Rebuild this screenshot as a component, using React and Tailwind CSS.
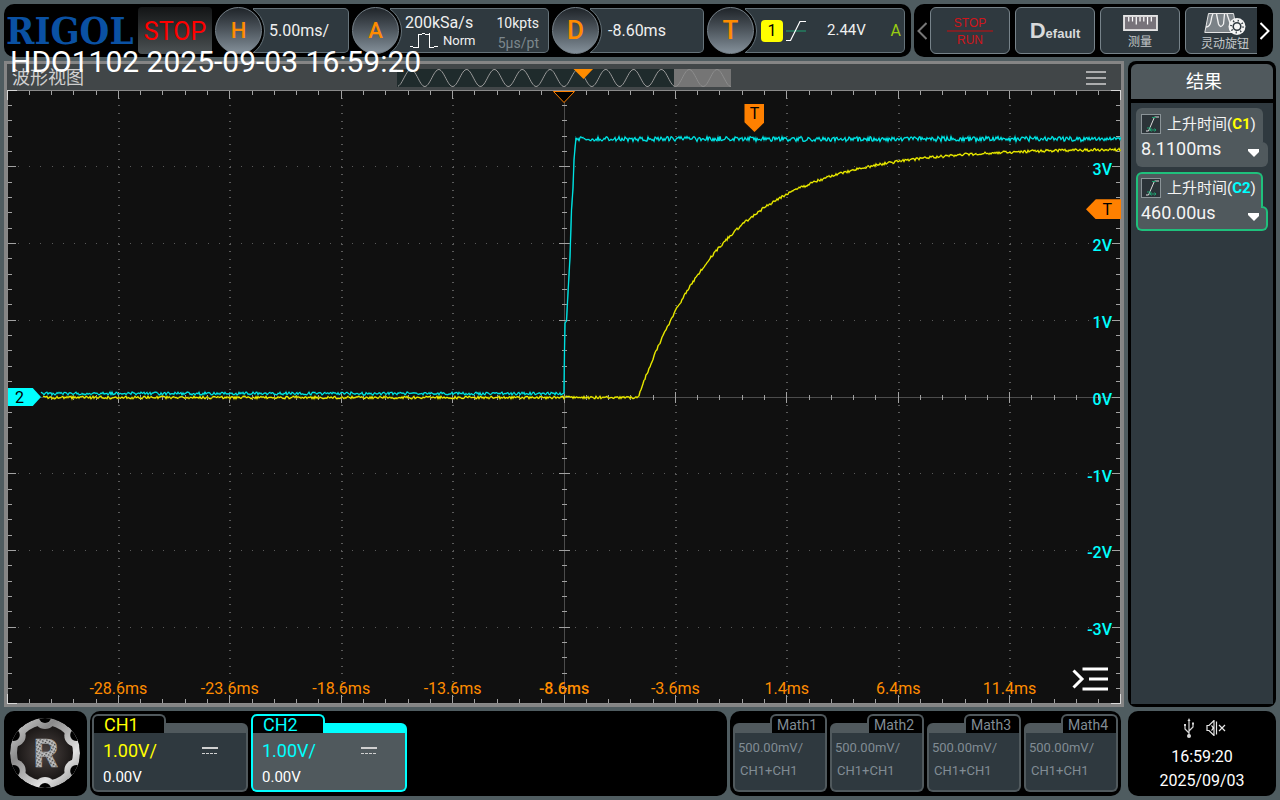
import React from "react";

const PLOT_W = 1114;
const PLOT_H = 614;
const COLS = 10;
const ROWS = 8;
const DIV_X = PLOT_W / COLS;
const DIV_Y = PLOT_H / ROWS;

const TIME_LABELS = ["-28.6ms", "-23.6ms", "-18.6ms", "-13.6ms", "-8.6ms", "-3.6ms", "1.4ms", "6.4ms", "11.4ms"];
const VOLT_LABELS = ["3V", "2V", "1V", "0V", "-1V", "-2V", "-3V"];
const MATH_CHANNELS = ["Math1", "Math2", "Math3", "Math4"];

const CHANNELS = [
  { name: "CH1", scale: "1.00V/", offset: "0.00V", selected: false },
  { name: "CH2", scale: "1.00V/", offset: "0.00V", selected: true },
];

const RESULTS = [
  { source: "C1", value: "8.1100ms", active: false },
  { source: "C2", value: "460.00us", active: true },
];

// small repeatable noise source so the traces look the same on every render
const makeNoise = (seed) => {
  let s = seed;
  return () => {
    s = (s * 16807) % 2147483647;
    return s / 2147483647 - 0.5;
  };
};

const toPath = (points) => points.map(([x, y], i) => `${i ? "L" : "M"}${x.toFixed(1)} ${y.toFixed(1)}`).join("");

const buildCh1 = () => {
  const noise = makeNoise(77);
  const points = [];
  for (let x = 36; x <= PLOT_W; x += 1) {
    const rise = x > 631 ? 249 * (1 - Math.exp(-(x - 631) / 88)) : 0;
    points.push([x, 307.5 - rise + noise() * 2.6]);
  }
  return toPath(points);
};

const buildCh2 = () => {
  const noise = makeNoise(1234);
  const points = [];
  for (let x = 34; x <= 556; x += 1) points.push([x, 303.5 + noise() * 3]);
  points.push([557, 303], [557.5, 260], [558, 233], [559.5, 231], [560.5, 212], [563, 167], [564.5, 120], [566, 98], [567, 70], [568, 58], [569, 48]);
  for (let x = 570; x <= PLOT_W; x += 1) points.push([x, 49 + noise() * 5]);
  return toPath(points);
};

const CH1_PATH = buildCh1();
const CH2_PATH = buildCh2();

const range = (n) => Array.from({ length: n }, (_, i) => i);

const Graticule = () => {
  const minorX = range(COLS * 5 + 1).map((i) => ({ x: (i * DIV_X) / 5, major: i % 5 === 0 }));
  const minorY = range(ROWS * 5 + 1).map((i) => ({ y: (i * DIV_Y) / 5, major: i % 5 === 0 }));
  const dotX = DIV_X / 10;
  const dotY = DIV_Y / 10;
  return (
    <g fill="none" shapeRendering="crispEdges">
      <g stroke="#5a5a5a">
        {range(COLS - 1).filter((i) => i !== 4).map((i) => (
          <line key={i} x1={(i + 1) * DIV_X + 0.5} x2={(i + 1) * DIV_X + 0.5} y1={dotY} y2={PLOT_H} strokeWidth="2" strokeDasharray={`1 ${dotY - 1}`} />
        ))}
        {range(ROWS - 1).filter((i) => i !== 3).map((i) => (
          <line key={i} x1={dotX} x2={PLOT_W} y1={(i + 1) * DIV_Y} y2={(i + 1) * DIV_Y} strokeDasharray={`1 ${dotX - 1}`} />
        ))}
      </g>
      <path d={`M${PLOT_W / 2} 0V${PLOT_H}M0 ${PLOT_H / 2 + 0.5}H${PLOT_W}`} stroke="#4c4c4c" />
      <g stroke="#a2a2a2">
        {minorX.map(({ x, major }) => {
          const len = major ? 9 : 5;
          const half = major ? 5 : 2;
          return <path key={x} d={`M${x} 0V${len}M${x} ${PLOT_H}V${PLOT_H - len}M${x} ${PLOT_H / 2 - half}V${PLOT_H / 2 + half + 1}`} />;
        })}
        {minorY.map(({ y, major }) => {
          const len = major ? 9 : 5;
          const half = major ? 5 : 2;
          return <path key={y} d={`M0 ${y}H${len}M${PLOT_W} ${y}H${PLOT_W - len}M${PLOT_W / 2 - half} ${y}H${PLOT_W / 2 + half + 1}`} />;
        })}
        <rect x="0.5" y="0.5" width={PLOT_W - 1} height={PLOT_H - 1} stroke="#8a8a8a" />
      </g>
      <path
        d={`M0.5 10V0.5H10M${PLOT_W - 10} 0.5H${PLOT_W - 0.5}V10M0.5 ${PLOT_H - 10}V${PLOT_H - 0.5}H10M${PLOT_W - 10} ${PLOT_H - 0.5}H${PLOT_W - 0.5}V${PLOT_H - 10}`}
        stroke="#d8d8d8"
      />
    </g>
  );
};

const Plot = () => (
  <div className="relative min-h-0 flex-1 bg-[#101010]">
    <svg viewBox={`0 0 ${PLOT_W} ${PLOT_H}`} preserveAspectRatio="none" className="absolute inset-0 h-full w-full">
      <Graticule />
      <path d={CH1_PATH} fill="none" stroke="#8f8f00" strokeWidth="1.6" />
      <path d={CH1_PATH} fill="none" stroke="#ffff00" strokeWidth="0.9" />
      <path d={CH2_PATH} fill="none" stroke="#008f8f" strokeWidth="1.5" />
      <path d={CH2_PATH} fill="none" stroke="#00ffff" strokeWidth="0.8" />
    </svg>

    <svg viewBox="0 0 22 13" className="absolute left-1/2 top-px h-[13px] w-[22px] -translate-x-1/2">
      <path d="M.5 .5h21L11 11.500z" fill="#000" stroke="#ff8000" />
    </svg>

    <div className="absolute left-[67.1%] top-[14px] flex h-7 w-5 -translate-x-1/2 justify-center bg-[#ff8000] text-base leading-5 text-black [clip-path:polygon(0_0,100%_0,100%_65%,50%_100%,0_65%)]">
      T
    </div>
    <div className="absolute right-0 top-[17.8%] flex h-5 w-[35px] justify-end bg-[#ff8000] pr-[9px] text-base leading-[21px] text-black [clip-path:polygon(0_50%,28%_0,100%_0,100%_100%,28%_100%)]">
      T
    </div>
    <div className="absolute left-px top-1/2 h-[18px] w-[33px] -translate-y-1/2 bg-[#00ffff] pl-[7px] text-base leading-[19px] text-black [clip-path:polygon(0_0,75%_0,100%_50%,75%_100%,0_100%)]">
      2
    </div>

    {VOLT_LABELS.map((label, i) => (
      <span
        key={label}
        className="absolute right-[9px] -translate-y-1/2 text-base leading-5 font-medium text-[#00ffff]"
        style={{ top: `${((i + 1) / ROWS) * 100 + 0.45}%` }}
      >
        {label}
      </span>
    ))}
    {TIME_LABELS.map((label, i) => (
      <span
        key={label}
        className={`absolute bottom-[5px] -translate-x-1/2 text-base leading-5 text-[#ff8c00] ${i === 4 ? "font-medium" : ""}`}
        style={{ left: `${((i + 1) / COLS) * 100}%` }}
      >
        {label}
      </span>
    ))}

    <button type="button" aria-label="Show panel" className="absolute bottom-3 right-[13px]">
      <svg viewBox="0 0 36 26" className="h-[26px] w-9" fill="none" stroke="#fff">
        <path d="M1.500 4.500l8.500 8.500-8.500 8.500" strokeWidth="3" />
        <path d="M10.500 3H36M17 13h19M10.500 23H36" strokeWidth="3.200" />
      </svg>
    </button>
  </div>
);

const sinePath = (from, to) => {
  const points = [];
  for (let x = from; x <= to; x += 1) points.push([x, 9 + 8.5 * Math.cos((x / 27.83) * Math.PI * 2)]);
  return toPath(points);
};

const Overview = () => (
  <svg viewBox="0 0 334 18" className="h-[18px] w-[334px]">
    <rect width="277" height="18" fill="#1f2b2c" />
    <rect x="277" width="57" height="18" fill="#757575" />
    <path d={sinePath(1, 277)} fill="none" stroke="#9a9a9a" />
    <path d={sinePath(277, 334)} fill="none" stroke="#8d8d8d" />
    <path d="M176.500 0h19.500l-9.500 10z" fill="#ff8c00" />
  </svg>
);

const Knob = ({ letter, large, basis, children }) => (
  <div className={`relative flex h-[47px] items-center ${basis}`}>
    <div className="absolute inset-y-px left-[38px] right-0 overflow-hidden rounded-r-[5px] border border-l-0 border-[#66737a] bg-[#2f393f]">
      <span className="absolute -left-[42px] -top-[5px] h-[54px] w-[54px] rounded-full border border-[#66737a] bg-black" />
    </div>
    <button
      type="button"
      className={`relative h-[47px] w-[47px] shrink-0 rounded-full border border-[#77828a] bg-linear-to-b from-[#20252a] to-[#84909a] font-medium text-[#ff8c00] ${large ? "text-[26px]" : "text-[22px]"}`}
    >
      {letter}
    </button>
    <div className="relative flex h-full min-w-0 flex-1 items-center text-base text-[#f0f0f0]">{children}</div>
  </div>
);

const Toolbar = () => (
  <header className="flex h-[53px] shrink-0 gap-[3px] pr-[3px]">
    <div className="flex min-w-0 flex-1 items-center gap-[3px] rounded-[10px] bg-black pr-[6px]">
      <div className="flex h-full w-[131px] shrink-0 items-center pl-[2px] font-['DejaVu_Serif_Condensed','DejaVu_Serif',serif] text-[38px] leading-[53px] font-bold text-[#0a51a3]">
        RIGOL
      </div>
      <div className="flex h-[47px] w-[74px] shrink-0 items-center justify-center rounded bg-linear-to-b from-[#131516] to-[#4c5254] pt-[2px] text-[25px] text-[#ff0000]">STOP</div>
      <Knob letter="H" basis="grow basis-[134px]">
        <span className="pl-[7px]">5.00ms/</span>
      </Knob>
      <Knob letter="A" basis="grow basis-[197px]">
        <div className="flex w-full flex-col justify-center pl-[6px] pr-[10px]">
          <div className="flex h-5 items-center justify-between pt-[2px]">
            <span>200kSa/s</span>
            <span className="text-sm">10kpts</span>
          </div>
          <div className="flex h-[18px] items-center">
            <svg viewBox="0 0 28 17" className="ml-[5px] h-[17px] w-7" fill="none" stroke="#fff" shapeRendering="crispEdges">
              <path d="M0 14.500h3M3 15.500h5V1.500M8 2.500h4M12 1.500h3M15 2.500h4M19.500 1v14M19 15.500h5M24 14.500h4" />
            </svg>
            <span className="ml-[5px] text-[13px]">Norm</span>
            <span className="ml-auto pt-1 text-sm text-[#7c878d]">5µs/pt</span>
          </div>
        </div>
      </Knob>
      <Knob letter="D" large basis="grow basis-[152px]">
        <span className="pl-[9px]">-8.60ms</span>
      </Knob>
      <Knob letter="T" large basis="grow basis-[198px]">
        <span className="ml-[7px] flex h-[22px] w-[22px] items-center justify-center rounded bg-[#ffff00] text-base text-black">1</span>
        <svg viewBox="0 0 20 20" className="ml-[3px] h-5 w-5" fill="none">
          <path d="M0 10h20" stroke="#1fa070" />
          <path d="M0 19.500h4.500L14 .5h6" stroke="#fff" strokeWidth="1.200" />
        </svg>
        <span className="ml-[21px] text-[15px]">2.44V</span>
        <span className="ml-auto pr-1 text-[#99cc11]">A</span>
      </Knob>
    </div>

    <nav className="flex w-[359px] shrink-0 items-center rounded-[10px] bg-black text-xs">
      <button type="button" aria-label="Previous" className="flex w-4 justify-center">
        <svg viewBox="0 0 10 18" className="h-[18px] w-[10px]" fill="none" stroke="#777" strokeWidth="2">
          <path d="M9.500 1L1.500 9l8 8" />
        </svg>
      </button>
      <div className="flex flex-1 gap-[5px] overflow-hidden">
        <button type="button" className="flex h-[47px] w-20 shrink-0 flex-col items-center justify-center rounded-md border border-[#77838a] bg-[#2f393f] pt-[2px] font-['Liberation_Sans',sans-serif] text-xs text-[#d0151b]">
          <span className="w-[46px] border-b-2 border-[#7d2226] leading-[14px]">STOP</span>
          <span className="leading-4">RUN</span>
        </button>
        <button type="button" className="flex h-[47px] w-20 shrink-0 items-baseline justify-center rounded-md border border-[#77838a] bg-[#2f393f] font-['Liberation_Sans',sans-serif] font-bold text-[#d8dadb]">
          <span className="text-[22px] leading-[46px]">D</span>
          <span className="text-[13px]">efault</span>
        </button>
        <button type="button" className="flex h-[47px] w-20 shrink-0 flex-col items-center rounded-md border border-[#77838a] bg-[#2f393f] pt-[7px] text-[#c4c8ca]">
          <svg viewBox="0 0 37 17" className="h-[17px] w-[37px]">
            <rect x="1" y="1" width="35" height="15" fill="#77737a" stroke="#e4e4e4" strokeWidth="2" />
            <path d="M6 2v5M10 2v5M14 2v8M18 2v5M22 2v5M26 2v8M30 2v5" stroke="#fff" strokeWidth="1.300" />
          </svg>
          <span className="leading-[22px]">测量</span>
        </button>
        <button type="button" className="flex h-[47px] w-20 shrink-0 flex-col items-center rounded-md border border-[#77838a] bg-[#2f393f] pt-1 text-[#c4c8ca]">
          <svg viewBox="0 0 42 24" className="h-6 w-[42px]" fill="none">
            <path d="M4.500 1.500h25L33 20.500H.8z" fill="#7b8287" stroke="#e4e4e4" />
            <path d="M2 15q4 0 5-6t2-7M12.500 2l2 10q2 5 5 0l1-10M23 2l3 9q2 4 5 3" stroke="#f2f2f2" strokeWidth="1.300" />
            <circle cx="33" cy="14.500" r="8.500" fill="#f5f5f5" />
            <circle cx="33" cy="14.500" r="3.800" stroke="#2f393f" strokeWidth="1.600" />
            <circle cx="33" cy="14.500" r="6" stroke="#2f393f" strokeWidth="1.800" strokeDasharray="1.200 3.500" />
          </svg>
          <span className="leading-4">灵动旋钮</span>
        </button>
      </div>
      <button type="button" aria-label="Next" className="flex w-4 justify-center">
        <svg viewBox="0 0 10 18" className="h-[18px] w-[10px]" fill="none" stroke="#fff" strokeWidth="2">
          <path d="M.5 1l8 8-8 8" />
        </svg>
      </button>
    </nav>
  </header>
);

const ResultCard = ({ source, value, active }) => {
  const border = active ? "border-[#1fc07c]" : "border-[#50595d]";
  return (
    <button type="button" className="flex h-[59px] w-full flex-col text-left text-[#f4f4f4]">
      <span className={`flex h-[30px] w-[127px] items-center gap-[6px] rounded-t-md border-2 border-b-0 bg-[#50595d] pl-[3px] ${border}`}>
        <svg viewBox="0 0 20 20" className="h-5 w-5 shrink-0" fill="none">
          <rect x=".5" y=".5" width="19" height="19" fill="#2b3338" stroke="#8b9498" />
          <path d="M5 17h2.500L13.500 3H18" stroke="#ddd" />
          <path d="M8 16h7M10.500 14.500L9 16l1.500 1.500M13.500 14.500L15 16l-1.500 1.500M11 3.500h4M6 14h4" stroke="#1fa070" />
        </svg>
        <span className="whitespace-nowrap text-[15px]">
          上升时间(<b className={source === "C1" ? "text-[#ffff00]" : "text-[#00ffff]"}>{source}</b>)
        </span>
      </span>
      <span className="flex w-full flex-1">
        <span className={`flex flex-1 items-start justify-between rounded-bl-md border-2 border-t-0 border-r-0 bg-[#50595d] pl-[3px] pt-px text-lg leading-5 ${border}`}>
          {value}
          <svg viewBox="0 0 12 8" className="-mr-px mt-[10px] h-2 w-3">
            <path d="M0 0h12v2L6 8 0 2z" fill="#fff" />
          </svg>
        </span>
        <span className="flex w-[9px] flex-col">
          <span className={`h-1 w-1 border-r-2 bg-[#50595d] ${border}`} />
          <span className={`flex flex-1`}>
            <span className={`w-[2px] border-b-2 bg-[#50595d] ${border}`} />
            <span className={`flex-1 rounded-r-md border-2 border-l-0 bg-[#50595d] ${border}`} />
          </span>
        </span>
      </span>
    </button>
  );
};

const ResultsPanel = () => (
  <aside className="flex w-[148px] shrink-0 flex-col gap-1 rounded-lg bg-black p-[3px]">
    <h2 className="flex h-[35px] items-center justify-center rounded-t-md bg-[#50595d] pl-1 pt-px text-lg text-white">结果</h2>
    <div className="flex flex-1 flex-col gap-[5px] bg-[#2f393f] p-[5px]">
      {RESULTS.map((result) => (
        <ResultCard key={result.source} {...result} />
      ))}
    </div>
  </aside>
);

const around = (radius) =>
  [-90, -30, 30, 90, 150, 210].map((deg) => [41 + radius * Math.cos((deg * Math.PI) / 180), 42 + radius * Math.sin((deg * Math.PI) / 180)]);

const GearLogo = () => (
  <svg viewBox="0 0 83 85" className="h-full w-full">
    <defs>
      <linearGradient id="metal" gradientUnits="userSpaceOnUse" x1="10" y1="10" x2="74" y2="76">
        <stop offset="0" stopColor="#d0d0d0" />
        <stop offset=".3" stopColor="#8a8a8a" />
        <stop offset=".5" stopColor="#b4b4b4" />
        <stop offset=".7" stopColor="#e2e2e2" />
        <stop offset="1" stopColor="#8c8c8c" />
      </linearGradient>
      <radialGradient id="core">
        <stop offset="0" stopColor="#4d4543" />
        <stop offset="1" stopColor="#1a1716" />
      </radialGradient>
      <pattern id="mesh" width="3" height="3" patternUnits="userSpaceOnUse" patternTransform="rotate(30)">
        <rect width="3" height="3" fill="#c0c0c0" />
        <rect width="1.500" height="1.500" fill="#3a3a3a" />
      </pattern>
      <clipPath id="rim">
        <circle cx="41" cy="42" r="35" />
      </clipPath>
    </defs>
    <g clipPath="url(#rim)">
      <circle cx="41" cy="42" r="35" fill="url(#metal)" />
      <circle cx="41" cy="42" r="28" fill="url(#core)" />
      {around(35).map(([x, y]) => (
        <circle key={`${x}-${y}`} cx={x} cy={y} r="11" fill="url(#metal)" />
      ))}
      {around(36).map(([x, y]) => (
        <circle key={`${x}-${y}`} cx={x} cy={y} r="6" fill="#000" />
      ))}
    </g>
    <text x="42" y="56" textAnchor="middle" fontFamily="Roboto, sans-serif" fontWeight="700" fontSize="39" fill="url(#mesh)" stroke="#a8a8a8" strokeWidth=".4">
      R
    </text>
  </svg>
);

const ChannelCard = ({ name, scale, offset, selected }) => {
  const border = selected ? "border-[#00ffff]" : "border-[#50595d]";
  const accent = name === "CH1" ? "text-[#ffff00]" : "text-[#00ffff]";
  return (
    <button type="button" className="flex h-[78px] w-[156px] flex-col text-left">
      <span className="flex h-[19px] w-full items-end">
        <span className={`h-[19px] w-[74px] rounded-t-md border-2 border-b-0 bg-black pl-[10px] text-lg leading-[18px] ${border} ${accent}`}>{name}</span>
        <span className={`h-[10px] flex-1 rounded-tr-md ${selected ? "bg-[#00ffff]" : "bg-[#50595d]"}`} />
      </span>
      <span className={`flex w-full flex-1 flex-col rounded-b-md border-2 border-t-0 pl-[9px] ${border} ${selected ? "bg-[#50595d]" : "bg-[#2f393f]"}`}>
        <span className={`flex h-9 items-center text-lg ${accent}`}>
          {scale}
          <svg viewBox="0 0 16 8" className="ml-auto mr-7 h-2 w-4" fill="none" stroke="#d0d0d0" shapeRendering="crispEdges">
            <path d="M0 1h16" strokeWidth="2" />
            <path d="M0 6.500h16" strokeDasharray="3 1" strokeWidth="1.500" />
          </svg>
        </span>
        <span className="text-[15px] leading-4 text-white">{offset}</span>
      </span>
    </button>
  );
};

const MathCard = ({ name }) => (
  <button type="button" className="flex h-[78px] w-[94px] flex-col text-left text-[#818c94]">
    <span className="flex h-[19px] w-full items-end">
      <span className="h-[10px] flex-1 rounded-tl-md bg-[#50595d]" />
      <span className="h-[19px] w-[57px] rounded-t-md border-2 border-b-0 border-[#50595d] bg-black pl-[5px] text-sm leading-[18px]">{name}</span>
    </span>
    <span className="flex w-full flex-1 flex-col rounded-b-md border-2 border-t-0 border-[#50595d] bg-[#2f393f] pl-[3px] pt-[3px] text-[13px] leading-[23px]">
      <span>500.00mV/</span>
      <span className="pl-[2px]">CH1+CH1</span>
    </span>
  </button>
);

const StatusBar = () => (
  <footer className="flex h-[85px] shrink-0 gap-[3px]">
    <button type="button" aria-label="Main menu" className="w-[83px] shrink-0 rounded-[10px] bg-black">
      <GearLogo />
    </button>
    <div className="flex flex-1 gap-[3px] rounded-[10px] bg-black pl-[2px] pt-[3px]">
      {CHANNELS.map((channel) => (
        <ChannelCard key={channel.name} {...channel} />
      ))}
    </div>
    <div className="flex w-[391px] shrink-0 justify-center gap-[3px] rounded-[10px] bg-black pt-[3px]">
      {MATH_CHANNELS.map((name) => (
        <MathCard key={name} name={name} />
      ))}
    </div>
    <div className="ml-1 flex w-[148px] shrink-0 flex-col items-center rounded-[10px] bg-black pt-[7px] text-base leading-6 text-white">
      <div className="mb-[7px] flex h-5 items-center gap-3 pl-[5px]">
        <svg viewBox="0 0 10 20" className="h-5 w-[10px]" fill="none" stroke="#d8d8d8" strokeWidth="1.200">
          <path d="M5 2v16M1 7v4l4 4M9 6v3l-4 4" />
          <path d="M3.500 3L5 0l1.500 3zM0 6h2v2H0zM8 4.500h2v2H8z" fill="#d8d8d8" stroke="none" />
          <circle cx="5" cy="18" r="2" fill="#d8d8d8" stroke="none" />
        </svg>
        <svg viewBox="0 0 20 16" className="h-4 w-5" fill="none" stroke="#e8e8e8" strokeWidth="1.200">
          <path d="M1 5.500v5h2l5 5V.5L3 5.500zM10.500 1.500v13M5.500 5.500q3 2.500 0 5" />
          <path d="M13 5l6 6M19 5l-6 6" />
        </svg>
      </div>
      <time>16:59:20</time>
      <time>2025/09/03</time>
    </div>
  </footer>
);

const App = () => (
  <div className="relative flex min-h-screen flex-col gap-1 bg-[#4f5c60] p-1 font-['Roboto','Noto_Sans_CJK_SC',sans-serif]">
    <Toolbar />
    <main className="flex flex-1 gap-1">
      <section className="flex min-w-0 flex-1 flex-col border-[3px] border-[#858585]">
        <div className="grid h-[26px] shrink-0 grid-cols-[1fr_auto_1fr] items-center bg-[#414648]">
          <h1 className="pl-[5px] pt-px text-lg leading-[26px] text-[#cfcfcf]">波形视图</h1>
          <Overview />
          <button type="button" aria-label="Menu" className="mr-[15px] justify-self-end">
            <svg viewBox="0 0 20 14" className="h-[14px] w-5" fill="none" stroke="#d0d0d0" strokeWidth="1.500">
              <path d="M0 1h20M0 7h20M0 13h20" />
            </svg>
          </button>
        </div>
        <Plot />
      </section>
      <ResultsPanel />
    </main>
    <StatusBar />
    <p className="pointer-events-none absolute left-[10px] top-[47px] text-[30px] leading-[30px] whitespace-nowrap text-white">HDO1102 2025-09-03 16:59:20</p>
  </div>
);

export default App;
